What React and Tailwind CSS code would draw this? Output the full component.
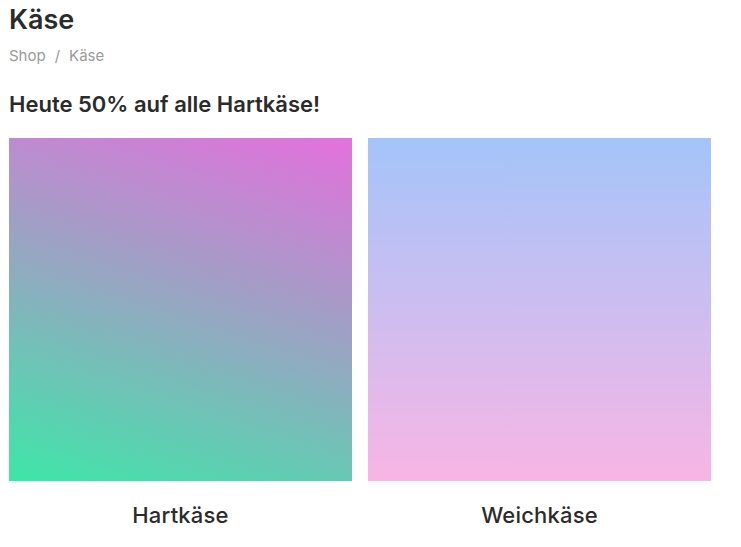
export default function App() {
  const cats = [
    { name: 'Hartkäse', bg: 'bg-[linear-gradient(18deg,#3ee6a8_0%,#94a8c1_50%,#e470dd_100%)]' },
    { name: 'Weichkäse', bg: 'bg-gradient-to-b from-[#a3c4f9] via-[#cdbdf0] to-[#f7b5e4]' },
  ];

  return (
    <div className="min-h-screen bg-white text-[#2b2b2b] px-[9px] pt-[3px]" style={{ fontFamily: 'Inter, "Open Sans", sans-serif' }}>
      <h1 className="text-[27px] font-semibold leading-[34px]">Käse</h1>

      {/* Breadcrumb */}
      <nav className="mt-[8px] flex items-center gap-[9px] text-[15px] text-[#9a9a9a]">
        <span>Shop</span>
        <span>/</span>
        <span>Käse</span>
      </nav>

      <h2 className="mt-[22px] text-[22px] font-semibold leading-[28px]">Heute 50% auf alle Hartkäse!</h2>

      <div className="mt-[20px] grid grid-cols-2 gap-[16px] w-[702px]">
        {cats.map(c => (
          <div key={c.name} className="flex flex-col">
            <div className={`h-[343px] ${c.bg}`} />
            <p className="mt-[20px] text-center text-[22px] font-medium leading-[28px] tracking-[0.2px]">{c.name}</p>
          </div>
        ))}
      </div>
    </div>
  );
}
